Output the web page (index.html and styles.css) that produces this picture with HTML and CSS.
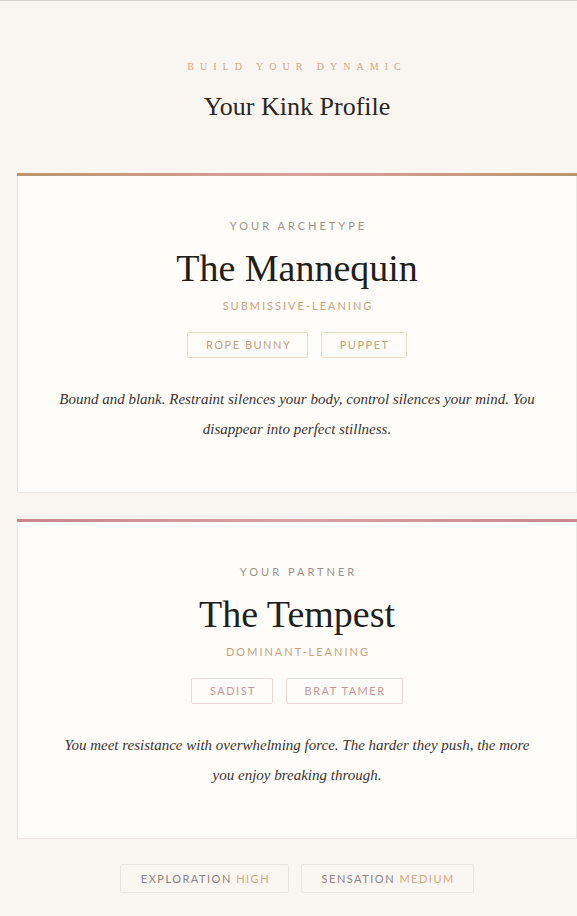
FILE: index.html
```html
<!DOCTYPE html>
<html lang="en">
<head>
<meta charset="utf-8">
<title>Your Kink Profile</title>
<link rel="stylesheet" href="styles.css">
</head>
<body>
<div class="page">
  <header class="header">
    <div class="eyebrow">BUILD YOUR DYNAMIC</div>
    <h1 class="page-title">Your Kink Profile</h1>
  </header>

  <section class="card card-self">
    <div class="card-label">YOUR ARCHETYPE</div>
    <h2 class="card-title">The Mannequin</h2>
    <div class="card-lean">SUBMISSIVE-LEANING</div>
    <div class="tags">
      <span class="tag tag-tan">ROPE BUNNY</span>
      <span class="tag tag-tan">PUPPET</span>
    </div>
    <p class="card-desc">Bound and blank. Restraint silences your body, control silences your mind. You disappear into perfect stillness.</p>
  </section>

  <section class="card card-partner">
    <div class="card-label">YOUR PARTNER</div>
    <h2 class="card-title">The Tempest</h2>
    <div class="card-lean">DOMINANT-LEANING</div>
    <div class="tags">
      <span class="tag tag-pink">SADIST</span>
      <span class="tag tag-pink">BRAT TAMER</span>
    </div>
    <p class="card-desc">You meet resistance with overwhelming force. The harder they push, the more you enjoy breaking through.</p>
  </section>

  <div class="stats">
    <span class="stat">EXPLORATION <span class="stat-value">HIGH</span></span>
    <span class="stat">SENSATION <span class="stat-value">MEDIUM</span></span>
  </div>
</div>
</body>
</html>
```

FILE: styles.css
```css
html, body {
  margin: 0;
  padding: 0;
}

body {
  background: #f9f6f2;
  border-top: 1px solid #d2d0ce;
  font-family: "Liberation Serif", "Times New Roman", serif;
  color: #2b2622;
}

.page {
  padding: 0 0 40px 17px;
}

.header {
  text-align: center;
  padding-top: 59px;
}

.eyebrow {
  font-size: 10px;
  line-height: 14px;
  letter-spacing: 6px;
  color: #cfa882;
}

.page-title {
  margin: 17px 0 0;
  font-weight: 400;
  font-size: 26px;
  line-height: 32px;
  color: #2b2622;
}

.card {
  margin-top: 50px;
  background: #fffdf9;
  border: 1px solid #ece7e2;
  border-top: 3px solid transparent;
  text-align: center;
  padding: 42px 30px 47px;
  position: relative;
}

.card::before {
  content: "";
  position: absolute;
  left: -1px;
  right: -1px;
  top: -3px;
  height: 3px;
}

.card-self::before {
  background: linear-gradient(90deg, #ba966e 0%, #d6a19c 50%, #ba966e 100%);
}

.card-partner {
  margin-top: 26px;
}

.card-partner::before {
  background: linear-gradient(90deg, #c6868b 0%, #d6a5a2 50%, #c6888c 100%);
}

.card-label {
  font-family: Lato, "Liberation Sans", sans-serif;
  font-size: 11px;
  line-height: 16px;
  letter-spacing: 3px;
  color: #9c928d;
  padding-left: 3px;
}

.card-title {
  margin: 10px 0 0;
  font-weight: 400;
  font-size: 38px;
  line-height: 48px;
  color: #221e1b;
}

.card-lean {
  margin-top: 6px;
  font-family: Lato, "Liberation Sans", sans-serif;
  font-size: 11px;
  line-height: 16px;
  letter-spacing: 2px;
  color: #c9a27b;
  padding-left: 2px;
}

.tags {
  margin-top: 18px;
  display: flex;
  justify-content: center;
  gap: 13px;
}

.tag {
  display: inline-block;
  height: 24px;
  line-height: 24px;
  padding: 0 16px 0 17.5px;
  font-family: Lato, "Liberation Sans", sans-serif;
  font-size: 11px;
  letter-spacing: 1.5px;
  border-radius: 2px;
}

.tag-tan {
  border: 1px solid #ecdcc8;
  color: #c5a07c;
}

.tag-pink {
  border: 1px solid #efd6d7;
  color: #c9969b;
}

.card-desc {
  max-width: 484px;
  margin: 26px auto 0;
  font-style: italic;
  font-size: 15px;
  line-height: 30.4px;
  color: #3a3330;
}

.stats {
  margin-top: 25px;
  display: flex;
  justify-content: center;
  gap: 12px;
}

.stat {
  display: inline-block;
  height: 27px;
  line-height: 27px;
  padding: 0 18px 0 19.5px;
  border: 1px solid #ebe5df;
  border-radius: 2px;
  font-family: Lato, "Liberation Sans", sans-serif;
  font-size: 11px;
  letter-spacing: 1.5px;
  color: #8c8483;
}

.stat-value {
  color: #d4aa7f;
}
```
